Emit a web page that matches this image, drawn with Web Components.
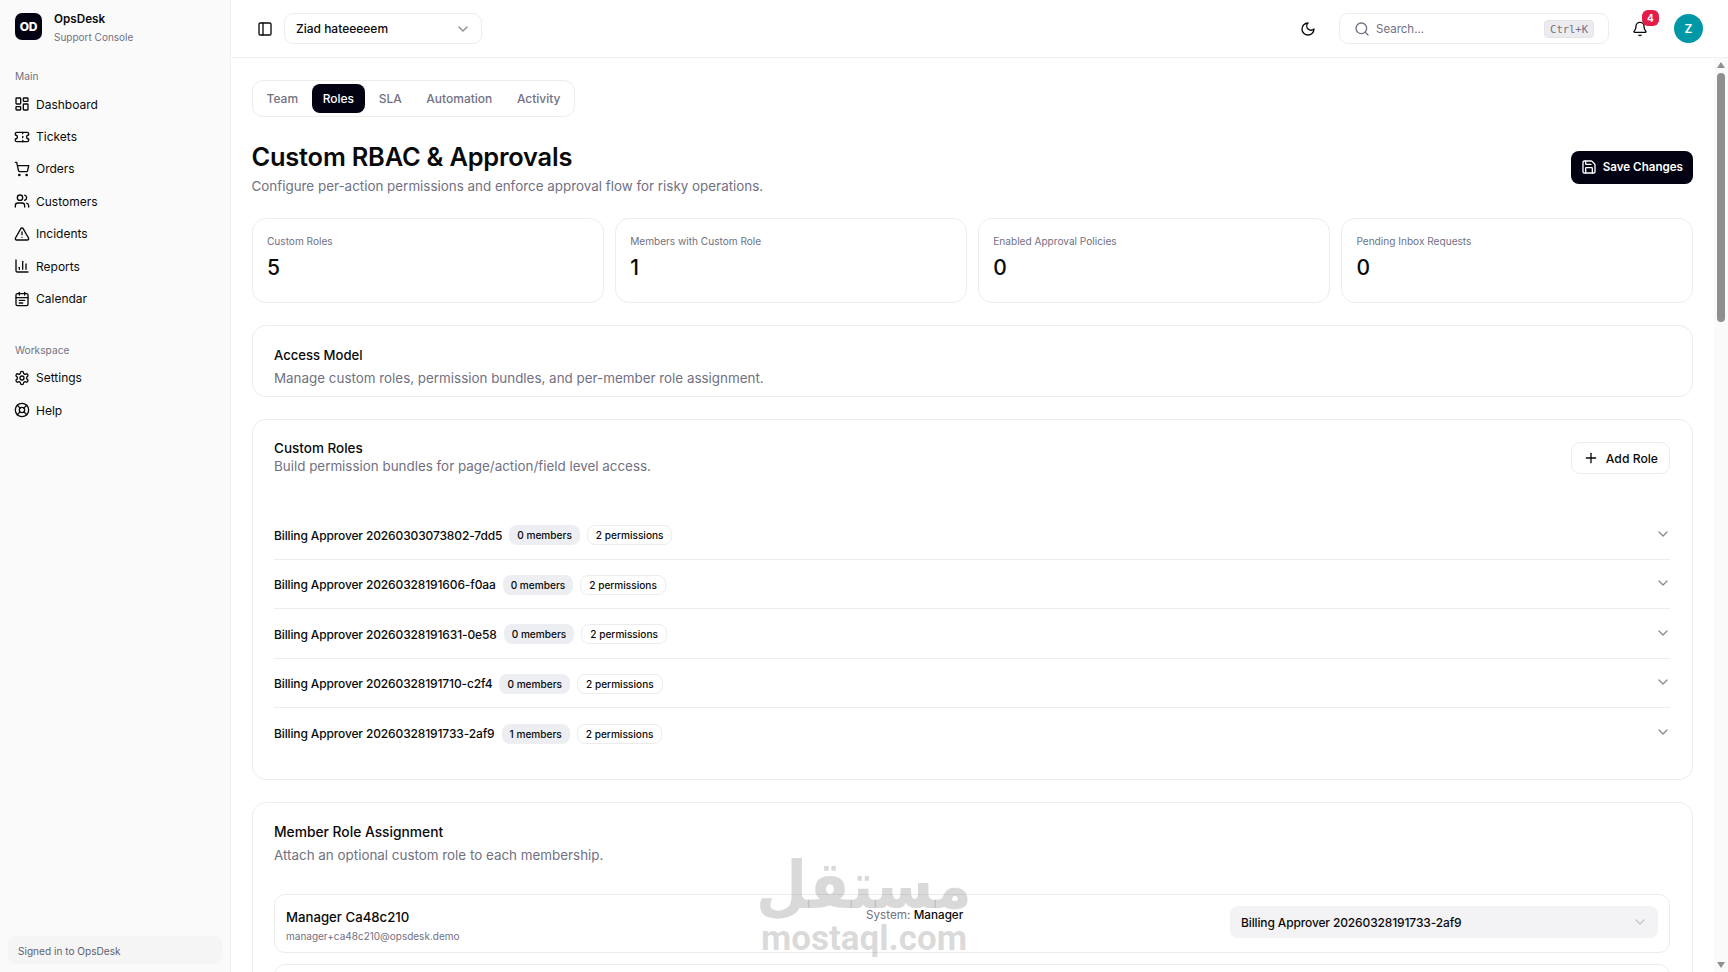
<!DOCTYPE html>
<html lang="en">
<head>
<meta charset="utf-8">
<title>OpsDesk - Roles</title>
<style>
  html, body { margin: 0; height: 972px; overflow: hidden; background: #fff; }
  body { font-family: Inter, "Noto Sans", sans-serif; color: #0a0a0a; }
</style>
</head>
<body>
<ops-app></ops-app>
<script>
const ICONS = {
    dashboard: '<rect x="3" y="3" width="7" height="9" rx="1"/><rect x="14" y="3" width="7" height="5" rx="1"/><rect x="14" y="12" width="7" height="9" rx="1"/><rect x="3" y="16" width="7" height="5" rx="1"/>',
    ticket: '<path d="M2 9a3 3 0 0 1 0 6v2a2 2 0 0 0 2 2h16a2 2 0 0 0 2-2v-2a3 3 0 0 1 0-6V7a2 2 0 0 0-2-2H4a2 2 0 0 0-2 2Z"/><path d="M13 5v2"/><path d="M13 17v2"/><path d="M13 11v2"/>',
    cart: '<circle cx="8" cy="21" r="1"/><circle cx="19" cy="21" r="1"/><path d="M2.05 2.05h2l2.66 12.42a2 2 0 0 0 2 1.58h9.78a2 2 0 0 0 1.95-1.57l1.65-7.43H5.12"/>',
    users: '<path d="M16 21v-2a4 4 0 0 0-4-4H6a4 4 0 0 0-4 4v2"/><circle cx="9" cy="7" r="4"/><path d="M22 21v-2a4 4 0 0 0-3-3.87"/><path d="M16 3.13a4 4 0 0 1 0 7.75"/>',
    alert: '<path d="m21.73 18-8-14a2 2 0 0 0-3.48 0l-8 14A2 2 0 0 0 4 21h16a2 2 0 0 0 1.73-3"/><path d="M12 9v4"/><path d="M12 17h.01"/>',
    chart: '<path d="M3 3v16a2 2 0 0 0 2 2h16"/><path d="M18 17V9"/><path d="M13 17V5"/><path d="M8 17v-3"/>',
    calendar: '<path d="M8 2v4"/><path d="M16 2v4"/><rect x="3" y="4" width="18" height="18" rx="2"/><path d="M3 10h18"/><path d="M8 14h8"/><path d="M8 18h5"/>',
    settings: '<path d="M12.22 2h-.44a2 2 0 0 0-2 2v.18a2 2 0 0 1-1 1.73l-.43.25a2 2 0 0 1-2 0l-.15-.08a2 2 0 0 0-2.73.73l-.22.38a2 2 0 0 0 .73 2.73l.15.1a2 2 0 0 1 1 1.72v.51a2 2 0 0 1-1 1.74l-.15.09a2 2 0 0 0-.73 2.73l.22.38a2 2 0 0 0 2.73.73l.15-.08a2 2 0 0 1 2 0l.43.25a2 2 0 0 1 1 1.73V20a2 2 0 0 0 2 2h.44a2 2 0 0 0 2-2v-.18a2 2 0 0 1 1-1.73l.43-.25a2 2 0 0 1 2 0l.15.08a2 2 0 0 0 2.73-.73l.22-.39a2 2 0 0 0-.73-2.73l-.15-.08a2 2 0 0 1-1-1.74v-.5a2 2 0 0 1 1-1.74l.15-.09a2 2 0 0 0 .73-2.73l-.22-.38a2 2 0 0 0-2.73-.73l-.15.08a2 2 0 0 1-2 0l-.43-.25a2 2 0 0 1-1-1.73V4a2 2 0 0 0-2-2z"/><circle cx="12" cy="12" r="3"/>',
    help: '<circle cx="12" cy="12" r="10"/><circle cx="12" cy="12" r="4"/><path d="m4.93 4.93 4.24 4.24"/><path d="m14.83 9.17 4.24-4.24"/><path d="m14.83 14.83 4.24 4.24"/><path d="m9.17 14.83-4.24 4.24"/>',
    panel: '<rect x="3" y="3" width="18" height="18" rx="2"/><path d="M9 3v18"/>',
    chevron: '<path d="m6 9 6 6 6-6"/>',
    moon: '<path d="M12 3a6 6 0 0 0 9 9 9 9 0 1 1-9-9Z"/>',
    search: '<circle cx="11" cy="11" r="8"/><path d="m21 21-4.3-4.3"/>',
    bell: '<path d="M10.268 21a2 2 0 0 0 3.464 0"/><path d="M3.262 15.326A1 1 0 0 0 4 17h16a1 1 0 0 0 .74-1.673C19.41 13.956 18 12.499 18 8A6 6 0 0 0 6 8c0 4.499-1.411 5.956-2.738 7.326"/>',
    save: '<path d="M15.2 3a2 2 0 0 1 1.4.6l3.8 3.8a2 2 0 0 1 .6 1.4V19a2 2 0 0 1-2 2H5a2 2 0 0 1-2-2V5a2 2 0 0 1 2-2z"/><path d="M17 21v-7a1 1 0 0 0-1-1H8a1 1 0 0 0-1 1v7"/><path d="M7 3v4a1 1 0 0 0 1 1h7"/>',
    plus: '<path d="M5 12h14"/><path d="M12 5v14"/>'
};

class UiIcon extends HTMLElement {
    connectedCallback() {
        const size = this.getAttribute('size') || 16;
        const name = this.getAttribute('name');
        this.attachShadow({ mode: 'open' }).innerHTML = `
      <style>
        :host { display: inline-flex; flex-shrink: 0; width: ${size}px; height: ${size}px; }
        svg { width: 100%; height: 100%; display: block; fill: none; stroke: currentColor;
              stroke-width: 2; stroke-linecap: round; stroke-linejoin: round; }
      </style>
      <svg viewBox="0 0 24 24">${ICONS[name] || ''}</svg>`;
    }
}
customElements.define('ui-icon', UiIcon);

class NavItem extends HTMLElement {
    connectedCallback() {
        this.attachShadow({ mode: 'open' }).innerHTML = `
      <style>
        :host { display: flex; align-items: center; gap: 6px; height: 32.4px; padding-left: 14px;
                font-size: 12px; color: #0a0a0a; }
      </style>
      <ui-icon name="${this.getAttribute('icon')}"></ui-icon>
      <slot></slot>`;
    }
}
customElements.define('nav-item', NavItem);

class OpsSidebar extends HTMLElement {
    connectedCallback() {
        this.attachShadow({ mode: 'open' }).innerHTML = `
      <style>
        :host { display: flex; flex-direction: column; height: 972px; box-sizing: border-box;
                background: #fafafa; border-right: 1px solid #f0f0f0; }
        .brand { display: flex; align-items: flex-start; gap: 12px; padding: 13px 15px 0; height: 27px; }
        .logo { width: 27px; height: 27px; border-radius: 7px; background: #030213; color: #fff;
                display: flex; align-items: center; justify-content: center;
                font-size: 12px; font-weight: 800; letter-spacing: -0.2px; }
        .txt { margin-top: -2px; }
        .name { font-size: 11.7px; font-weight: 600; line-height: 17px; }
        .sub { font-size: 10px; color: #717182; line-height: 16px; margin-top: 1px; }
        .label { font-size: 10.2px; color: #717182; padding-left: 15px; line-height: 14px; }
        .main { margin-top: 29px; }
        .work { margin-top: 28px; }
        .list { margin-top: 5px; }
        .spacer { flex: 1; }
        .foot { margin: 0 8px 8px; height: 28px; box-sizing: border-box; padding: 1px 0 0 10px; border-radius: 8px;
                background: #f5f5f5; color: #5f5f6e; font-size: 10.1px; display: flex; align-items: center; }
      </style>
      <div class="brand">
        <div class="logo">OD</div>
        <div class="txt"><div class="name">OpsDesk</div><div class="sub">Support Console</div></div>
      </div>
      <div class="label main">Main</div>
      <div class="list">
        <nav-item icon="dashboard">Dashboard</nav-item>
        <nav-item icon="ticket">Tickets</nav-item>
        <nav-item icon="cart">Orders</nav-item>
        <nav-item icon="users">Customers</nav-item>
        <nav-item icon="alert">Incidents</nav-item>
        <nav-item icon="chart">Reports</nav-item>
        <nav-item icon="calendar">Calendar</nav-item>
      </div>
      <div class="label work">Workspace</div>
      <div class="list">
        <nav-item icon="settings">Settings</nav-item>
        <nav-item icon="help">Help</nav-item>
      </div>
      <div class="spacer"></div>
      <div class="foot">Signed in to OpsDesk</div>`;
    }
}
customElements.define('ops-sidebar', OpsSidebar);

class OpsHeader extends HTMLElement {
    connectedCallback() {
        this.attachShadow({ mode: 'open' }).innerHTML = `
      <style>
        :host { display: flex; align-items: center; height: 58px; box-sizing: border-box;
                border-bottom: 1px solid #f0f0f0; padding: 0 25px 0 26px; background: #fff; }
        .select { display: flex; align-items: center; justify-content: space-between; box-sizing: border-box;
                  width: 198px; height: 31px; margin-left: 11px; padding: 0 10px 0 11px;
                  border: 1px solid #ececec; border-radius: 9px; font-size: 12px; font-weight: 500; }
        .select ui-icon { color: #8a8a96; }
        .grow { flex: 1; }
        .search { display: flex; align-items: center; box-sizing: border-box; width: 270px; height: 31px;
                  margin-left: 23px; padding: 0 14px 0 14px; border: 1px solid #ececec; border-radius: 9px;
                  color: #717182; font-size: 11.5px; gap: 6px; }
        .search span { flex: 1; }
        kbd { font-family: "DejaVu Sans Mono", "Liberation Mono", monospace; font-size: 10.5px; color: #717182;
              background: #ececf0; border: 1px solid #e4e4e8; border-radius: 4px; padding: 1px 5px; line-height: 14px; }
        .bell { position: relative; margin-left: 23px; display: flex; }
        .badge { position: absolute; left: 10px; top: -11px; width: 17px; height: 16px; border-radius: 6px;
                 background: #e11d48; color: #fff; font-size: 10px; font-weight: 700;
                 display: flex; align-items: center; justify-content: center; }
        .avatar { width: 29px; height: 29px; margin-left: 26px; border-radius: 50%; background: #0097a7; color: #fff;
                  font-size: 12px; font-weight: 600; display: flex; align-items: center; justify-content: center; }
      </style>
      <ui-icon name="panel"></ui-icon>
      <div class="select">Ziad hateeeeem <ui-icon name="chevron"></ui-icon></div>
      <div class="grow"></div>
      <ui-icon name="moon"></ui-icon>
      <div class="search">
        <ui-icon name="search"></ui-icon>
        <span>Search...</span>
        <kbd>Ctrl+K</kbd>
      </div>
      <div class="bell"><ui-icon name="bell"></ui-icon><div class="badge">4</div></div>
      <div class="avatar">Z</div>`;
    }
}
customElements.define('ops-header', OpsHeader);

class TabBar extends HTMLElement {
    connectedCallback() {
        const active = this.getAttribute('active');
        const tabs = this.getAttribute('tabs').split(',');
        this.attachShadow({ mode: 'open' }).innerHTML = `
      <style>
        :host { display: inline-flex; align-self: flex-start; flex-shrink: 0; align-items: center; gap: 2.6px; height: 37px;
                box-sizing: border-box; padding: 0 3px; border: 1px solid #ececec; border-radius: 11px; }
        span { display: flex; align-items: center; height: 29px; padding: 0 11px; border-radius: 8px;
               font-size: 12px; font-weight: 500; color: #717182; }
        span.on { background: #030213; color: #fff; }
      </style>
      ${tabs.map(t => `<span class="${t === active ? 'on' : ''}">${t}</span>`).join('')}`;
    }
}
customElements.define('tab-bar', TabBar);

class StatCard extends HTMLElement {
    connectedCallback() {
        this.attachShadow({ mode: 'open' }).innerHTML = `
      <style>
        :host { display: block; box-sizing: border-box; height: 85px; padding: 15px 15px 0 14.5px;
                border: 1px solid #ececec; border-radius: 14px; }
        .l { font-size: 10.1px; color: #717182; line-height: 14px; }
        .v { font-size: 21px; font-weight: 500; line-height: 28px; margin-top: 6px; }
      </style>
      <div class="l">${this.getAttribute('label')}</div>
      <div class="v">${this.getAttribute('value')}</div>`;
    }
}
customElements.define('stat-card', StatCard);

class SectionCard extends HTMLElement {
    connectedCallback() {
        const h = this.getAttribute('h');
        this.attachShadow({ mode: 'open' }).innerHTML = `
      <style>
        :host { display: block; box-sizing: border-box; border: 1px solid #ececec; border-radius: 14px;
                padding: var(--card-top, 20px) 22px 0 21.5px; ${h ? `height: ${h}px;` : ''} }
        .top { display: flex; align-items: flex-start; justify-content: space-between; }
        .t { font-size: var(--title-size, 13.5px); font-weight: 500; line-height: 18px; }
        .d { font-size: 13.4px; color: #717182; line-height: 18px; margin-top: var(--desc-gap, 5px); }
      </style>
      <div class="top">
        <div>
          <div class="t">${this.getAttribute('title')}</div>
          <div class="d">${this.getAttribute('desc')}</div>
        </div>
        <slot name="action"></slot>
      </div>
      <slot></slot>`;
    }
}
customElements.define('section-card', SectionCard);

class RoleRow extends HTMLElement {
    connectedCallback() {
        this.attachShadow({ mode: 'open' }).innerHTML = `
      <style>
        :host { display: flex; align-items: center; height: 49.5px; box-sizing: border-box; padding-top: 2px;
                border-bottom: 1px solid #ececec; font-size: 12px; letter-spacing: -0.13px; font-weight: 500; }
        :host(:last-child) { border-bottom: 0; }
        .pill { display: flex; align-items: center; height: 20px; box-sizing: border-box; padding: 0 8px; margin-left: 7px;
                border-radius: 8px; font-size: 10.1px; letter-spacing: 0; font-weight: 500; }
        .m { background: #eceef2; }
        .p { border: 1px solid #ececec; }
        .grow { flex: 1; }
        ui-icon { color: #8a8a96; margin: -3px -1px 0 0; }
      </style>
      <slot></slot>
      <span class="pill m">${this.getAttribute('members')} members</span>
      <span class="pill p">2 permissions</span>
      <div class="grow"></div>
      <ui-icon name="chevron"></ui-icon>`;
    }
}
customElements.define('role-row', RoleRow);

class MemberRow extends HTMLElement {
    connectedCallback() {
        const name = this.getAttribute('name');
        this.attachShadow({ mode: 'open' }).innerHTML = `
      <style>
        :host { display: grid; grid-template-columns: 580px 1fr 428px; align-items: center; box-sizing: border-box;
                height: 59px; flex-shrink: 0; padding: 0 11px 0 11px; border: 1px solid #ececec; border-radius: 11px; }
        .who { padding-top: 5px; }
        .n { font-size: 13.2px; font-weight: 500; line-height: 18px; }
        .e { font-size: 10px; color: #717182; line-height: 16px; margin-top: 2px; }
        .s { font-size: 11.7px; color: #717182; margin-top: -18px; }
        .s b { color: #0a0a0a; font-weight: 500; }
        .sel { display: flex; align-items: center; justify-content: space-between; box-sizing: border-box; height: 32px;
               margin-top: -3px; padding: 0 10px 0 11px; background: #f3f3f5; border-radius: 8px;
               font-size: 12px; letter-spacing: -0.13px; font-weight: 500; }
        .sel ui-icon { color: #c4c4cc; }
      </style>
      ${name ? `
      <div class="who"><div class="n">${name}</div><div class="e">${this.getAttribute('email')}</div></div>
      <div class="s">System: <b>${this.getAttribute('system')}</b></div>
      <div class="sel"><span>${this.getAttribute('role')}</span><ui-icon name="chevron"></ui-icon></div>` : ''}`;
    }
}
customElements.define('member-row', MemberRow);

class FakeScrollbar extends HTMLElement {
    connectedCallback() {
        this.attachShadow({ mode: 'open' }).innerHTML = `
      <style>
        :host { display: flex; flex-direction: column; align-items: center; width: 14px; flex-shrink: 0; background: #fafafa; }
        .up, .down { width: 0; height: 0; border-left: 4.5px solid transparent; border-right: 4.5px solid transparent; }
        .up { margin-top: 4px; border-bottom: 6px solid #8f8f8f; }
        .thumb { width: 8px; height: 249px; margin-top: 5px; border-radius: 4px; background: #8f8f8f; }
        .grow { flex: 1; }
        .down { margin-bottom: 4px; border-top: 6px solid #8f8f8f; }
      </style>
      <div class="up"></div><div class="thumb"></div><div class="grow"></div><div class="down"></div>`;
    }
}
customElements.define('fake-scrollbar', FakeScrollbar);

class OpsApp extends HTMLElement {
    connectedCallback() {
        this.attachShadow({ mode: 'open' }).innerHTML = `
      <style>
        :host { display: grid; grid-template-columns: 231px 1fr; height: 972px; overflow: hidden; }
        .right { display: flex; flex-direction: column; min-width: 0; height: 972px; }
        .body { flex: 1; display: flex; min-height: 0; position: relative; }
        main { flex: 1; min-width: 0; box-sizing: border-box; overflow: hidden; padding: 22px 21px 0 20.5px;
               display: flex; flex-direction: column; }
        .head { display: flex; align-items: center; justify-content: space-between; margin-top: 22px; flex-shrink: 0; }
        h1 { margin: 0; font-size: 25.4px; font-weight: 600; line-height: 35px; letter-spacing: -0.2px; }
        .sub { font-size: 13.4px; color: #717182; line-height: 20px; margin-top: 2px; }
        .save { display: flex; align-items: center; gap: 6px; height: 33px; padding: 0 10px; margin-top: -1px;
                background: #030213; color: #fff; border-radius: 8px; font-size: 11.6px; font-weight: 600; }
        .stats { display: grid; grid-template-columns: repeat(4, 1fr); gap: 11px; margin-top: 22px; flex-shrink: 0; }
        .access { margin-top: 22px; flex-shrink: 0; --desc-gap: 5px; --title-size: 13.1px; }
        .roles { margin-top: 22px; flex-shrink: 0; --desc-gap: 0px; --card-top: 19px; }
        .list { margin-top: 35px; }
        .add { display: flex; align-items: center; gap: 7px; box-sizing: border-box; height: 32px; padding: 0 11px;
               border: 1px solid #ececec; border-radius: 9px; font-size: 12.2px; font-weight: 500; margin-top: 3px; }
        .member { margin-top: 22px; flex-shrink: 0; --desc-gap: 5px; --title-size: 13.8px; }
        .rows { display: flex; flex-direction: column; gap: 11px; margin-top: 30px; }
        .mark { position: absolute; left: 529px; top: 792px; width: 208px; display: flex; flex-direction: column;
                align-items: center; color: rgba(110, 110, 110, 0.26); pointer-events: none; }
        .ar { font-family: "DejaVu Sans", sans-serif; font-weight: 700; font-size: 59px; line-height: 72px; white-space: nowrap;
              transform: scaleY(1.12); }
        .en { font-family: Roboto, "Liberation Sans", sans-serif; font-weight: 700; font-size: 35px; line-height: 34px; white-space: nowrap; }
      </style>
      <ops-sidebar></ops-sidebar>
      <div class="right">
        <ops-header></ops-header>
        <div class="body">
          <main>
            <tab-bar tabs="Team,Roles,SLA,Automation,Activity" active="Roles"></tab-bar>
            <div class="head">
              <div>
                <h1>Custom RBAC &amp; Approvals</h1>
                <div class="sub">Configure per-action permissions and enforce approval flow for risky operations.</div>
              </div>
              <div class="save"><ui-icon name="save"></ui-icon>Save Changes</div>
            </div>
            <div class="stats">
              <stat-card label="Custom Roles" value="5"></stat-card>
              <stat-card label="Members with Custom Role" value="1"></stat-card>
              <stat-card label="Enabled Approval Policies" value="0"></stat-card>
              <stat-card label="Pending Inbox Requests" value="0"></stat-card>
            </div>
            <section-card class="access" h="72" title="Access Model" desc="Manage custom roles, permission bundles, and per-member role assignment."></section-card>
            <section-card class="roles" h="361" title="Custom Roles" desc="Build permission bundles for page/action/field level access.">
              <div slot="action" class="add"><ui-icon name="plus"></ui-icon>Add Role</div>
              <div class="list">
                <role-row members="0">Billing Approver 20260303073802-7dd5</role-row>
                <role-row members="0">Billing Approver 20260328191606-f0aa</role-row>
                <role-row members="0">Billing Approver 20260328191631-0e58</role-row>
                <role-row members="0">Billing Approver 20260328191710-c2f4</role-row>
                <role-row members="1">Billing Approver 20260328191733-2af9</role-row>
              </div>
            </section-card>
            <section-card class="member" title="Member Role Assignment" desc="Attach an optional custom role to each membership.">
              <div class="rows">
                <member-row name="Manager Ca48c210" email="manager+ca48c210@opsdesk.demo" system="Manager" role="Billing Approver 20260328191733-2af9"></member-row>
                <member-row></member-row>
              </div>
            </section-card>
          </main>
          <fake-scrollbar></fake-scrollbar>
          <div class="mark"><div class="ar" lang="ar" dir="rtl">مستقل</div><div class="en">mostaql.com</div></div>
        </div>
      </div>`;
    }
}
customElements.define('ops-app', OpsApp);
</script>
</body>
</html>
